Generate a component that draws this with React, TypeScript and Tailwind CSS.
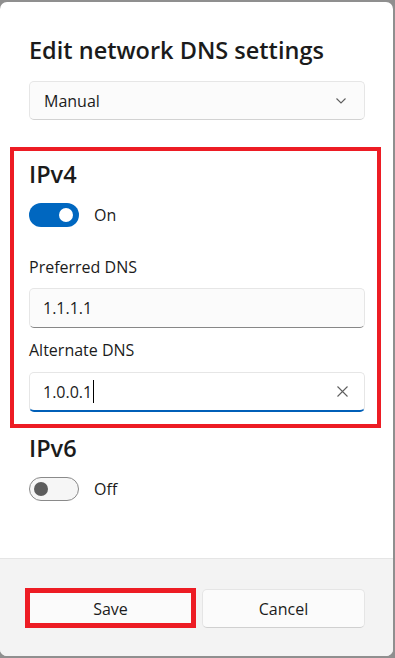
const font = { fontFamily: '"Segoe UI", "Open Sans", "Noto Sans", sans-serif' };

function Toggle({ on }: { on: boolean }) {
  if (on) {
    return (
      <div className="flex h-[24px] w-[50px] items-center justify-end rounded-full bg-[#0067c0] pr-[6px]">
        <div className="h-[14px] w-[14px] rounded-full bg-white" />
      </div>
    );
  }
  return (
    <div className="flex h-[24px] w-[50px] items-center rounded-full border border-[#8a8a8a] bg-[#f6f6f6] pl-[4px]">
      <div className="h-[14px] w-[14px] rounded-full bg-[#5d5d5d]" />
    </div>
  );
}

function Field({ label, value, focused }: { label: string; value: string; focused?: boolean }) {
  return (
    <div>
      <div className="text-[16px] leading-[22px] text-[#1b1b1b]">{label}</div>
      <div
        className={
          focused
            ? "mt-[11px] flex h-[40px] items-center rounded-[5px] border border-b-2 border-[#e6e6e6] border-b-[#005fb8] bg-white pl-[13px] pr-[16px]"
            : "mt-[10px] flex h-[40px] items-center rounded-[5px] border border-[#e6e6e6] border-b-[#878787] bg-[#fbfbfb] pl-[13px] pr-[16px]"
        }
      >
        <span className="text-[16px] leading-[22px] text-[#1b1b1b]">{value}</span>
        {focused && <span className="ml-[1px] h-[23px] w-[1px] bg-black" />}
        <div className="flex-1" />
        {focused && (
          <svg width="11" height="11" viewBox="0 0 11 11" className="text-[#5f5f5f]">
            <path d="M0.5 0.5 L10.5 10.5 M10.5 0.5 L0.5 10.5" stroke="currentColor" strokeWidth="1.1" />
          </svg>
        )}
      </div>
    </div>
  );
}

export default function App() {
  return (
    <div className="h-[658px] w-[395px] overflow-hidden bg-[#8f8f8f] pt-[2px]" style={font}>
      <div className="flex h-[654px] w-[393px] flex-col overflow-hidden rounded-[7px] bg-white">
        <div className="flex-1 pl-[29px] pr-[28px] pt-[33px]">
          <h1 className="text-[23.5px] font-semibold leading-[30px] text-[#1b1b1b]">
            Edit network DNS settings
          </h1>

          <div className="mt-[16px] flex h-[39px] items-center justify-between rounded-[5px] border border-[#e6e6e6] border-b-[#d2d2d2] bg-[#fbfbfb] pl-[14px] pr-[18px]">
            <span className="text-[16px] leading-[22px] text-[#1b1b1b]">Manual</span>
            <svg width="10" height="6" viewBox="0 0 10 6" className="text-[#5f5f5f]">
              <path d="M0.5 0.5 L5 5 L9.5 0.5" fill="none" stroke="currentColor" strokeWidth="1.1" />
            </svg>
          </div>

          <div className="-ml-[19px] -mr-[16px] mt-[27px] border-4 border-[#ed1c24] pb-[12px] pl-[15px] pr-[12px] pt-[8px]">
            <h2 className="text-[23.5px] font-semibold leading-[30px] text-[#1b1b1b]">IPv4</h2>
            <div className="mt-[14px] flex items-center gap-[15px]">
              <Toggle on />
              <span className="text-[16px] leading-[22px] text-[#1b1b1b]">On</span>
            </div>
            <div className="mt-[29px]">
              <Field label="Preferred DNS" value="1.1.1.1" />
            </div>
            <div className="mt-[11px]">
              <Field label="Alternate DNS" value="1.0.0.1" focused />
            </div>
          </div>

          <h2 className="mt-[5px] text-[23.5px] font-semibold leading-[30px] text-[#1b1b1b]">IPv6</h2>
          <div className="mt-[14px] flex items-center gap-[15px]">
            <Toggle on={false} />
            <span className="text-[16px] leading-[22px] text-[#1b1b1b]">Off</span>
          </div>
        </div>

        <div className="h-[98px] border-t border-[#e5e5e5] bg-[#f3f3f3] pl-[29px] pr-[28px] pt-[30px]">
          <div className="grid grid-cols-2 gap-[10px]">
            <div className="relative">
              <button className="flex h-[39px] w-full items-center justify-center rounded-[5px] border border-[#e5e5e5] bg-[#fbfbfb] text-[16px] text-[#1b1b1b]">
                Save
              </button>
              <div className="pointer-events-none absolute -left-[4px] -right-[4px] -top-[1px] bottom-0 border-[5px] border-[#ed1c24]" />
            </div>
            <button className="flex h-[39px] w-full items-center justify-center rounded-[5px] border border-[#e5e5e5] border-b-[#d0d0d0] bg-[#fbfbfb] text-[16px] text-[#1b1b1b]">
              Cancel
            </button>
          </div>
        </div>
      </div>
    </div>
  );
}
